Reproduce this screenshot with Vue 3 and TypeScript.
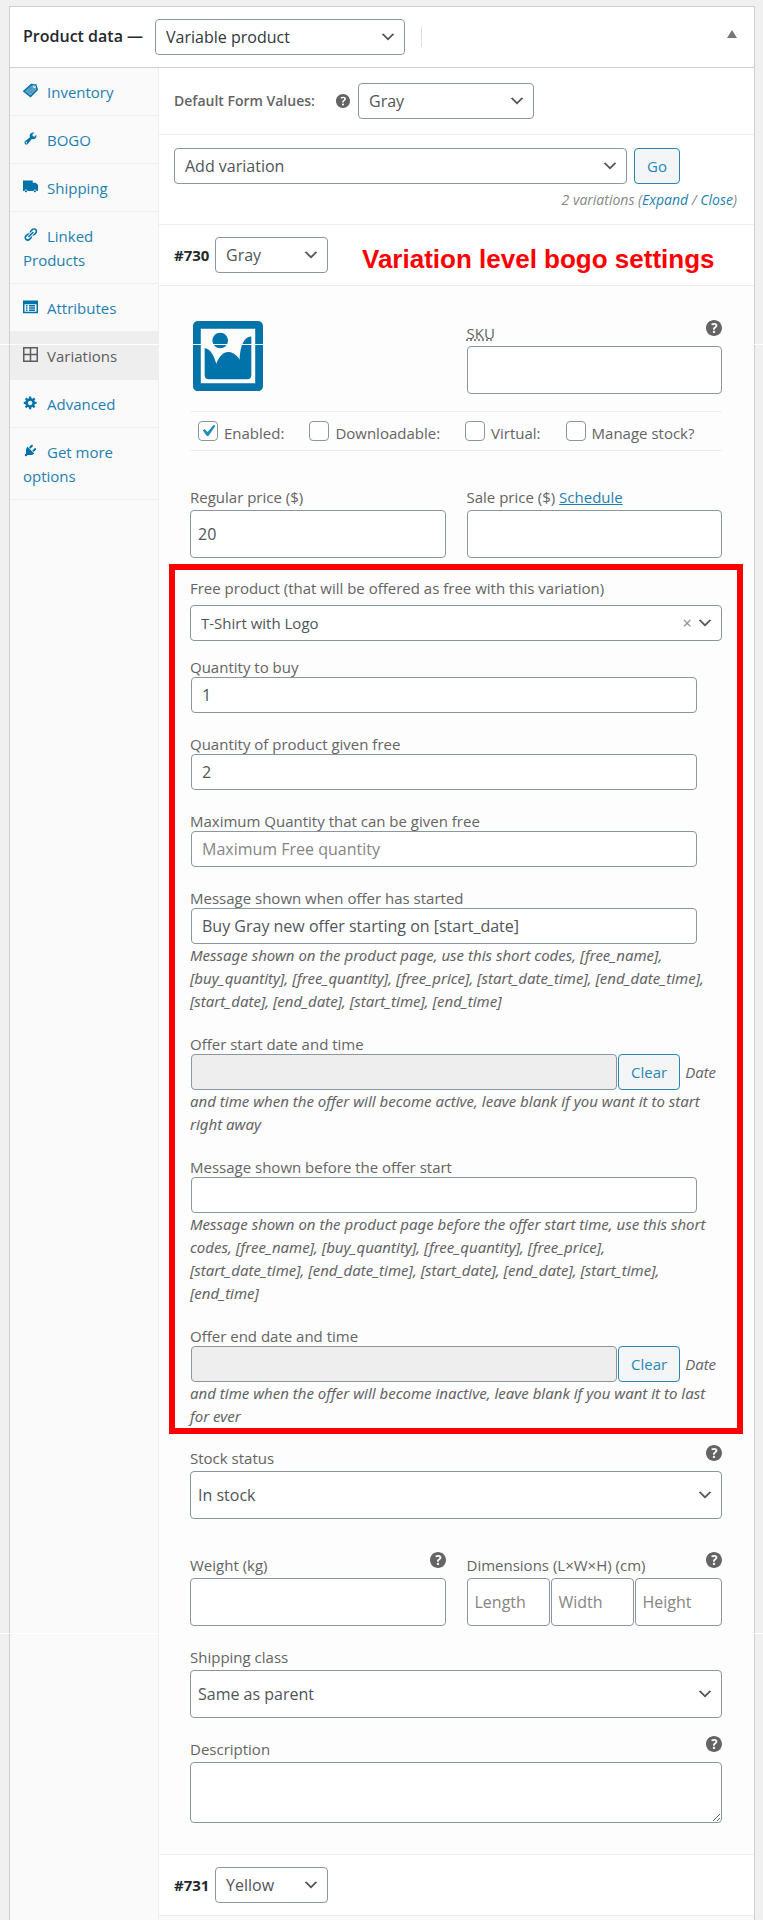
<script setup lang="ts">
import { ref } from 'vue'

interface Tab {
  label: string
  icon: string
  active?: boolean
}

interface Offer {
  id: string
  label: string
  value: string
  kind: 'text' | 'number' | 'date'
  placeholder?: string
  lead?: string
  help?: string
}

const tabs: Tab[] = [
  { label: 'Inventory', icon: 'tag' },
  { label: 'BOGO', icon: 'wrench' },
  { label: 'Shipping', icon: 'truck' },
  { label: 'Linked Products', icon: 'link' },
  { label: 'Attributes', icon: 'list' },
  { label: 'Variations', icon: 'grid', active: true },
  { label: 'Advanced', icon: 'gear' },
  { label: 'Get more options', icon: 'plug' },
]

const icons: Record<string, string> = {
  wrench:
    'M16.68 9.77c-1.34 1.34-3.3 1.67-4.95.99l-5.41 6.52c-.99.99-2.59.99-3.58 0s-.99-2.59 0-3.57l6.52-5.42c-.68-1.65-.35-3.61.99-4.95 1.28-1.28 3.12-1.62 4.72-1.06l-2.89 2.89 2.82 2.82 2.86-2.87c.53 1.58.18 3.39-1.08 4.65zM3.81 16.21c.4.39 1.04.39 1.43 0 .4-.4.4-1.04 0-1.43-.39-.4-1.03-.4-1.43 0-.39.39-.39 1.03 0 1.43z',
  truck:
    'M0 2h13v3h4l3 3v8h-2a2 2 0 0 0-4 0H6a2 2 0 0 0-4 0H0zM4 15a1.4 1.4 0 1 0 .01 0zM16 15a1.4 1.4 0 1 0 .01 0z',
  link:
    'M17.74 2.76c1.68 1.69 1.68 4.41 0 6.1l-1.53 1.52c-1.12 1.12-2.7 1.47-4.14 1.09l2.62-2.61.76-.77.76-.76c.84-.84.84-2.2 0-3.04-.84-.85-2.2-.85-3.04 0l-.77.76-3.38 3.38c-.37-1.44-.02-3.02 1.1-4.14l1.52-1.53c1.69-1.68 4.42-1.68 6.1 0zM8.59 13.43l5.34-5.34c.42-.42.42-1.1 0-1.52-.44-.43-1.13-.39-1.53 0l-5.33 5.34c-.42.42-.42 1.1 0 1.52.44.43 1.13.39 1.52 0zm-.76 2.29l4.14-4.15c.38 1.44.03 3.02-1.09 4.14l-1.52 1.53c-1.69 1.68-4.41 1.68-6.1 0-1.68-1.68-1.68-4.42 0-6.1l1.53-1.52c1.12-1.12 2.7-1.47 4.14-1.1l-4.14 4.15c-.85.84-.85 2.2 0 3.05.84.84 2.2.84 3.04 0z',
  list:
    'M0 2h20v17H0zM2 7v10h16V7zM4 8h2v2H4zM8 8h8v2H8zM4 11h2v2H4zM8 11h8v2H8zM4 14h2v2H4zM8 14h8v2H8z',
  grid: 'M0 0h20v20H0zM2 2v7h7V2zM11 2v7h7V2zM2 11v7h7v-7zM11 11v7h7v-7z',
  gear:
    'M18 12h-2.18c-.17.7-.44 1.35-.81 1.93l1.54 1.54-2.1 2.1-1.54-1.54c-.58.36-1.23.63-1.91.79V19H8v-2.18c-.68-.16-1.33-.43-1.91-.79l-1.54 1.54-2.12-2.12 1.54-1.54c-.36-.58-.63-1.23-.79-1.91H1V9.03h2.17c.16-.7.44-1.35.8-1.94L2.43 5.55l2.1-2.1 1.54 1.54c.58-.37 1.24-.64 1.93-.81V2h3v2.18c.68.16 1.33.43 1.91.79l1.54-1.54 2.12 2.12-1.54 1.54c.36.59.64 1.24.8 1.94H18V12zm-8.5 1.5c1.66 0 3-1.34 3-3s-1.34-3-3-3-3 1.34-3 3 1.34 3 3 3z',
  plug:
    'M13.11 4.36L9.87 7.6 8 5.73l3.24-3.24c.35-.34 1.05-.2 1.56.32.52.51.66 1.21.31 1.55zm-8 1.77l.91-1.12 9.01 9.01-1.19.84c-.71.71-2.63 1.16-3.82 1.16H6.14L4.9 17.26c-.59.59-1.54.59-2.12 0-.59-.58-.59-1.53 0-2.12l1.24-1.24v-3.88c0-1.13.4-3.19 1.09-3.89zm7.26 3.97l3.24-3.24c.34-.35 1.04-.21 1.55.31.52.51.66 1.21.31 1.55l-3.24 3.25z',
}

const helpPath =
  'M17 10c0-3.87-3.14-7-7-7-3.87 0-7 3.13-7 7s3.13 7 7 7c3.86 0 7-3.13 7-7zm-6.3 1.48H9.14v-.43c0-.38.08-.7.24-.98s.46-.57.88-.89c.41-.29.68-.53.81-.71.14-.18.2-.39.2-.62 0-.25-.09-.44-.28-.58-.19-.13-.45-.19-.79-.19-.58 0-1.25.19-2 .57l-.64-1.28c.87-.49 1.8-.74 2.77-.74.81 0 1.45.2 1.92.58.48.39.71.91.71 1.55 0 .43-.09.8-.29 1.11-.19.32-.57.67-1.11 1.06-.38.28-.61.49-.71.63-.1.15-.15.34-.15.57v.35zm-1.47 2.74c-.18-.17-.27-.42-.27-.73 0-.33.08-.58.26-.75s.43-.25.77-.25c.32 0 .57.09.75.26s.27.42.27.74c0 .3-.09.55-.27.72-.18.18-.43.27-.75.27-.33 0-.58-.09-.76-.26z'

const flags = ref([
  { id: 'enabled', label: 'Enabled:', on: true },
  { id: 'downloadable', label: 'Downloadable:', on: false },
  { id: 'virtual', label: 'Virtual:', on: false },
  { id: 'manage-stock', label: 'Manage stock?', on: false },
])

const offers = ref<Offer[]>([
  { id: 'qty-buy', label: 'Quantity to buy', value: '1', kind: 'number' },
  { id: 'qty-free', label: 'Quantity of product given free', value: '2', kind: 'number' },
  {
    id: 'qty-max',
    label: 'Maximum Quantity that can be given free',
    value: '',
    kind: 'number',
    placeholder: 'Maximum Free quantity',
  },
  {
    id: 'msg-started',
    label: 'Message shown when offer has started',
    value: 'Buy Gray new offer starting on [start_date]',
    kind: 'text',
    help: 'Message shown on the product page, use this short codes, [free_name], [buy_quantity], [free_quantity], [free_price], [start_date_time], [end_date_time], [start_date], [end_date], [start_time], [end_time]',
  },
  {
    id: 'offer-start',
    label: 'Offer start date and time',
    value: '',
    kind: 'date',
    lead: 'Date',
    help: 'and time when the offer will become active, leave blank if you want it to start right away',
  },
  {
    id: 'msg-before',
    label: 'Message shown before the offer start',
    value: '',
    kind: 'text',
    help: 'Message shown on the product page before the offer start time, use this short codes, [free_name], [buy_quantity], [free_quantity], [free_price], [start_date_time], [end_date_time], [start_date], [end_date], [start_time], [end_time]',
  },
  {
    id: 'offer-end',
    label: 'Offer end date and time',
    value: '',
    kind: 'date',
    lead: 'Date',
    help: 'and time when the offer will become inactive, leave blank if you want it to last for ever',
  },
])

const regularPrice = ref('20')
const freeProduct = ref('T-Shirt with Logo')
</script>

<template>
  <div class="page">
    <section class="panel">
      <header class="panel-head">
        <h2><label for="product-type">Product data —</label></h2>
        <select id="product-type" class="select type">
          <option>Variable product</option>
        </select>
        <span class="divider"></span>
        <button type="button" class="toggle" aria-label="Toggle panel"></button>
      </header>

      <div class="panel-body">
        <nav class="tabs">
          <a v-for="tab in tabs" :key="tab.label" href="#" class="tab" :class="{ active: tab.active }">
            <svg v-if="tab.icon === 'tag'" class="tab-icon" viewBox="0 0 20 20" aria-hidden="true">
              <path d="M11 2l6 1 2 6-9 9-9-7z" fill="#6fa9ca" stroke="currentColor" stroke-width="2" />
              <path d="M5 8l8 6M7 6l8 6M9 4l7 5M3 11l9-8M5 13l9-8M7 15l10-9" stroke="currentColor" stroke-width="1" opacity=".5" />
              <circle cx="15" cy="5" r="2" fill="#fff" />
              <path d="M14 6l4-5" stroke="currentColor" stroke-width="1" />
            </svg>
            <svg v-else class="tab-icon" viewBox="0 0 20 20" aria-hidden="true">
              <path :d="icons[tab.icon]" fill="currentColor" fill-rule="evenodd" />
            </svg><span>{{ tab.label }}</span></a>
        </nav>

        <main class="content">
          <div class="bar defaults">
            <label for="default-value" class="strong">Default Form Values:</label>
            <svg class="help small" viewBox="3 3 14 14" aria-hidden="true"><path :d="helpPath" /></svg>
            <select id="default-value" class="select medium">
              <option>Gray</option>
            </select>
          </div>

          <div class="bar toolbar">
            <div class="actions">
              <select class="select bulk" aria-label="Variation action">
                <option>Add variation</option>
              </select>
              <button type="button" class="button go">Go</button>
            </div>
            <p class="count">2 variations (<a href="#">Expand</a> / <a href="#">Close</a>)</p>
          </div>

          <div class="bar variation">
            <label for="v730" class="number">#730</label>
            <select id="v730" class="select attr">
              <option>Gray</option>
            </select>
            <strong class="callout">Variation level bogo settings</strong>
          </div>

          <div class="details">
            <div class="pair">
              <button type="button" class="upload" aria-label="Upload image">
                <svg viewBox="1 1 18 18" aria-hidden="true">
                  <path fill="#0073aa" d="M2.250 1h15.500c.69 0 1.250.56 1.250 1.250v15.500c0 .69-.56 1.250-1.250 1.250H2.250C1.560 19 1 18.440 1 17.750V2.250C1 1.560 1.560 1 2.250 1zM17 17V3H3v14h14zM10 6c0-1.100-.9-2-2-2s-2 .9-2 2 .9 2 2 2 2-.9 2-2zm3 5s0-6 3-6v10c0 .55-.45 1-1 1H5c-.55 0-1-.45-1-1V8c2 0 3 4 3 4s1-3 3-3 3 2 3 2z" />
                </svg>
              </button>
              <div class="field">
                <div class="caption">
                  <label for="sku"><abbr title="Stock Keeping Unit">SKU</abbr></label>
                  <svg class="help" viewBox="3 3 14 14" aria-hidden="true"><path :d="helpPath" /></svg>
                </div>
                <input id="sku" type="text" class="input tall" />
              </div>
            </div>

            <div class="flags">
              <label v-for="flag in flags" :key="flag.id" :for="flag.id" class="flag">
                <input :id="flag.id" v-model="flag.on" type="checkbox" />
                <span>{{ flag.label }}</span>
              </label>
            </div>

            <div class="pair prices">
              <div class="field">
                <div class="caption"><label for="regular">Regular price ($)</label></div>
                <input id="regular" v-model="regularPrice" type="text" class="input tall" />
              </div>
              <div class="field">
                <div class="caption">
                  <span><label for="sale">Sale price ($)</label> <a href="#" class="schedule">Schedule</a></span>
                </div>
                <input id="sale" type="text" class="input tall" />
              </div>
            </div>

            <section class="offer">
              <div class="offer-field first">
                <label for="free-product">Free product (that will be offered as free with this variation)</label>
                <div class="picker">
                  <select id="free-product" v-model="freeProduct" class="select">
                    <option>T-Shirt with Logo</option>
                  </select>
                  <button type="button" class="clear-x" aria-label="Remove product">×</button>
                </div>
              </div>

              <div v-for="item in offers" :key="item.id" class="offer-field">
                <label :for="item.id">{{ item.label }}</label>
                <div v-if="item.kind === 'date'" class="date-row">
                  <input :id="item.id" v-model="item.value" type="text" class="input" readonly />
                  <button type="button" class="button" @click="item.value = ''">Clear</button>
                  <em>{{ item.lead }}</em>
                </div>
                <input
                  v-else
                  :id="item.id"
                  v-model="item.value"
                  type="text"
                  class="input indent"
                  :inputmode="item.kind === 'number' ? 'numeric' : 'text'"
                  :placeholder="item.placeholder"
                />
                <p v-if="item.help" class="hint">{{ item.help }}</p>
              </div>
            </section>

            <div class="field stock">
              <div class="caption">
                <label for="stock">Stock status</label>
                <svg class="help" viewBox="3 3 14 14" aria-hidden="true"><path :d="helpPath" /></svg>
              </div>
              <select id="stock" class="select tall">
                <option>In stock</option>
              </select>
            </div>

            <div class="pair sizes">
              <div class="field">
                <div class="caption">
                  <label for="weight">Weight (kg)</label>
                  <svg class="help" viewBox="3 3 14 14" aria-hidden="true"><path :d="helpPath" /></svg>
                </div>
                <input id="weight" type="text" class="input tall" />
              </div>
              <div class="field">
                <div class="caption">
                  <label for="length">Dimensions (L×W×H) (cm)</label>
                  <svg class="help" viewBox="3 3 14 14" aria-hidden="true"><path :d="helpPath" /></svg>
                </div>
                <div class="dims">
                  <input id="length" type="text" class="input tall" placeholder="Length" />
                  <input type="text" class="input tall" placeholder="Width" aria-label="Width" />
                  <input type="text" class="input tall" placeholder="Height" aria-label="Height" />
                </div>
              </div>
            </div>

            <div class="field spaced">
              <div class="caption"><label for="ship">Shipping class</label></div>
              <select id="ship" class="select tall">
                <option>Same as parent</option>
              </select>
            </div>

            <div class="field spaced">
              <div class="caption">
                <label for="description">Description</label>
                <svg class="help" viewBox="3 3 14 14" aria-hidden="true"><path :d="helpPath" /></svg>
              </div>
              <textarea id="description" class="input area"></textarea>
            </div>
          </div>

          <div class="bar variation">
            <label for="v731" class="number">#731</label>
            <select id="v731" class="select attr">
              <option>Yellow</option>
            </select>
          </div>
          <div class="rest"></div>
        </main>
      </div>
    </section>
    <i class="seam upper"></i>
    <i class="seam lower"></i>
  </div>
</template>

<style>
body {
  margin: 0;
  background: #f0f0f1;
}
</style>

<style scoped>
*,
*::before,
*::after {
  box-sizing: border-box;
}

.page {
  position: relative;
  display: flex;
  min-height: 100vh;
  padding: 6px 8px 0 9px;
  background: #f0f0f0;
  color: #646464;
  font: 15px/20px 'Open Sans', 'Noto Sans', sans-serif;
}

.panel {
  flex: 1;
  min-width: 0;
  display: flex;
  flex-direction: column;
  background: #fff;
  border: 1px solid #ccd0d4;
  border-bottom: 0;
}

.panel-head {
  display: flex;
  align-items: center;
  height: 61px;
  padding: 0 17px 0 13px;
  border-bottom: 1px solid #ccd0d4;
}

h2 {
  margin: 0 12px 2px 0;
  color: #23282d;
  font-size: 16px;
  font-weight: 600;
  white-space: nowrap;
}

.divider {
  width: 1px;
  height: 20px;
  margin-left: 16px;
  background: #ddd;
}

.toggle {
  width: 10px;
  height: 8px;
  margin: 0 0 6px auto;
  padding: 0;
  border: 0;
  background: #72777c;
  clip-path: polygon(50% 0, 100% 100%, 0 100%);
}

.panel-body {
  flex: 1;
  display: flex;
}

.tabs {
  flex: 0 0 149px;
  background: #fafafa;
  border-right: 1px solid #eee;
}

.tab {
  display: block;
  padding: 12px 12px 11px 13px;
  border-bottom: 1px solid #eee;
  color: #0073aa;
  line-height: 24px;
  text-decoration: none;
}

.tab span {
  color: #1f7fb2;
}

.tab.active,
.tab.active span {
  background: #eee;
  color: #5c5c5c;
}

.tab-icon {
  width: 15px;
  height: 15px;
  margin-right: 9px;
  vertical-align: 0;
}

.content {
  flex: 1;
  min-width: 0;
  display: flex;
  flex-direction: column;
}

.bar {
  border-bottom: 1px solid #eee;
}

.select,
.input,
.button {
  height: 36px;
  border: 1px solid #8c96a0;
  border-radius: 4px;
  background-color: #fff;
  color: #50555a;
  font: 16px/20px 'Open Sans', 'Noto Sans', sans-serif;
}

.select {
  appearance: none;
  padding: 0 28px 0 10px;
  background-image: url("data:image/svg+xml,%3Csvg xmlns='http://www.w3.org/2000/svg' viewBox='0 0 20 20'%3E%3Cpath d='M5 6l5 5 5-5 2 1-7 7-7-7 2-1z' fill='%23555'/%3E%3C/svg%3E");
  background-repeat: no-repeat;
  background-position: right 7px center;
  background-size: 18px;
}

.input {
  width: 100%;
  margin: 0;
  padding: 0 10px;
}

.input::placeholder {
  color: #858585;
  opacity: 1;
}

.button {
  padding: 0 12px;
  border-color: #2a87b5;
  background: #f3f5f6;
  color: #2a87b5;
  font-size: 15px;
}

.tall {
  height: 48px;
  padding-left: 7px;
}

.type {
  flex: 0 1 250px;
  color: #32373c;
}

.help {
  width: 16px;
  height: 16px;
  fill: #646464;
}

.defaults {
  display: flex;
  align-items: center;
  height: 67px;
  padding: 0 15px;
}

.strong {
  font-size: 14px;
  font-weight: 600;
}

.small {
  width: 14px;
  height: 14px;
  margin: 0 8px 0 auto;
}

.medium {
  width: 176px;
  margin-right: 205px;
}

.toolbar {
  height: 90px;
  padding: 13px 17px 0 15px;
}

.actions {
  display: flex;
  gap: 7px;
}

.bulk {
  flex: 0 1 453px;
}

.go {
  width: 46px;
}

.count {
  margin: 6px 0 0;
  color: #888;
  font: italic 14px/20px 'Open Sans', 'Noto Sans', sans-serif;
  text-align: right;
}

a {
  color: #1f7fb2;
  text-decoration: none;
}

.variation {
  display: flex;
  align-items: center;
  height: 61px;
  padding: 0 15px;
}

.number {
  width: 41px;
  color: #23282d;
  font-weight: 700;
}

.attr {
  width: 113px;
}

.callout {
  margin: 8px 0 0 34px;
  color: #f00;
  font: bold 26px/30px 'Liberation Sans', Arial, sans-serif;
  white-space: nowrap;
}

.details {
  padding: 35px 32px 31px 31px;
  background: #fdfdfd;
  border-bottom: 1px solid #eee;
}

.pair {
  display: grid;
  grid-template-columns: 1fr 1fr;
  gap: 21px;
}

.field {
  min-width: 0;
  display: flex;
  flex-direction: column;
  gap: 3px;
}

.caption {
  display: flex;
  justify-content: space-between;
  height: 20px;
}

.caption .help {
  margin-top: -3px;
}

abbr {
  text-decoration: underline dotted;
}

.upload {
  width: 70px;
  height: 70px;
  margin-left: 3px;
  padding: 0;
  border: 0;
  background: none;
}

.upload svg {
  display: block;
}

.pair:first-child .field {
  padding-top: 2px;
}

.flags {
  display: flex;
  gap: 25px;
  align-items: center;
  height: 40px;
  margin-top: 17px;
  padding-left: 8px;
  border-top: 1px solid #eee;
  border-bottom: 1px solid #eee;
}

.flag {
  display: flex;
  gap: 6px;
  align-items: center;
  white-space: nowrap;
}

.flag span {
  padding-top: 4px;
}

.flag input {
  appearance: none;
  width: 20px;
  height: 20px;
  margin: 0;
  border: 1px solid #8c96a0;
  border-radius: 4px;
  background: #fff;
}

.flag input:checked {
  background: #fff
    url("data:image/svg+xml,%3Csvg xmlns='http://www.w3.org/2000/svg' viewBox='0 0 20 20'%3E%3Cpath d='M14.83 4.89l1.34.94-5.81 8.38H9.02L5.78 9.67l1.34-1.25 2.57 2.4z' fill='%231e8cbe'/%3E%3C/svg%3E")
    center / 24px no-repeat;
}

.prices {
  margin-top: 36px;
}

.schedule {
  text-decoration: underline;
}

.offer {
  display: flex;
  flex-direction: column;
  gap: 21px;
  margin: 6px -21px 14px;
  padding: 8px 15px 0;
  border: 6px solid #f00;
}

.offer-field {
  display: flex;
  flex-direction: column;
}

.first {
  gap: 7px;
  margin-bottom: -5px;
}

.picker {
  position: relative;
  display: flex;
}

.picker .select {
  width: 100%;
  font-size: 15px;
}

.clear-x {
  position: absolute;
  top: 8px;
  right: 26px;
  width: 18px;
  height: 20px;
  padding: 0;
  border: 0;
  background: none;
  color: #888;
  font: 16px/20px 'Open Sans', sans-serif;
}

.indent {
  width: auto;
  margin: 0 25px 0 1px;
}

.date-row {
  display: flex;
  gap: 1px;
  align-items: center;
  padding-left: 1px;
}

.date-row .input {
  flex: 0 1 426px;
  min-width: 0;
  background: #eee;
}

.date-row .button {
  flex: 0 0 61px;
}

.date-row em {
  padding-left: 4px;
}

.hint {
  margin: 0;
  padding-right: 4px;
  font-family: 'Noto Sans', 'Open Sans', sans-serif;
  font-style: italic;
  line-height: 23px;
}

.sizes {
  margin-top: 36px;
}

.dims {
  display: grid;
  grid-template-columns: 83px 83px 1fr;
  gap: 1px;
}

.spaced {
  margin-top: 21px;
}

.area {
  height: 61px;
  resize: vertical;
}

.rest {
  flex: 1;
  background: #fafafa;
}

.seam {
  position: absolute;
  left: 0;
  right: 0;
  height: 1px;
  background: #fff;
}

.upper {
  top: 344px;
}

.lower {
  top: 1633px;
}
</style>
